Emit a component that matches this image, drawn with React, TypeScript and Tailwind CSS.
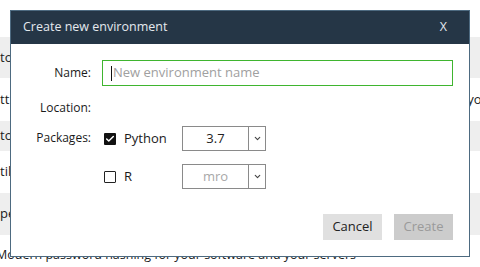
import { Check, ChevronDown } from "lucide-react";

const font = { fontFamily: '"Open Sans", "Noto Sans", sans-serif' };

const Select = ({ value, muted }: { value: string; muted?: boolean }) => (
  <div className="flex h-[25px] w-[84px] border border-[#8a8a8a] bg-white">
    <div className={`flex flex-1 items-center justify-center text-[13px] ${muted ? "text-[#a8a8a8]" : "text-[#222]"}`}>
      {value}
    </div>
    <div className="flex w-[17px] items-center justify-center border-l border-[#8a8a8a]">
      <ChevronDown className="h-[9px] w-[9px] text-[#444]" strokeWidth={3} />
    </div>
  </div>
);

const Checkbox = ({ checked }: { checked?: boolean }) => (
  <div
    className={`flex h-[12px] w-[12px] items-center justify-center rounded-[1px] ${
      checked ? "bg-[#111]" : "border-[1.5px] border-[#222] bg-white"
    }`}
  >
    {checked && <Check className="h-[10px] w-[10px] text-white" strokeWidth={3.5} />}
  </div>
);

export default function App() {
  return (
    <div className="relative h-[267px] w-[480px] overflow-hidden bg-white text-[13px] text-[#1a1a1a]" style={font}>
      {/* page behind */}
      <div className="flex flex-col">
        <div className="h-[37px]" />
        <div className="flex h-[41px] items-center bg-[#eeeeee]">
          <span>to</span>
        </div>
        <div className="flex h-[43px] items-center">
          <span>tt</span>
          <span className="ml-[458px]">you</span>
        </div>
        <div className="flex h-[30px] items-center bg-[#eeeeee]">
          <span>to</span>
        </div>
        <div className="flex h-[42px] items-center">
          <span>til</span>
        </div>
        <div className="flex h-[42px] items-center bg-[#eeeeee]">
          <span>pe</span>
        </div>
        <div className="flex h-[32px] items-end pb-[2px]">
          <span className="-ml-[4px] whitespace-nowrap text-[12.5px]">
            Modern password hashing for your software and your servers
          </span>
        </div>
      </div>

      {/* dialog */}
      <div className="absolute left-[10px] top-[10px] flex h-[247px] w-[460px] flex-col border border-[#4d6a80] bg-white">
        <div className="flex h-[33px] items-center justify-between bg-[#253646] pl-[12px] pr-[22px] text-[12.5px] text-[#e4e9ee]">
          <span>Create new environment</span>
          <span>X</span>
        </div>
        <div className="flex flex-1 flex-col pl-[26px] pr-[16px] pt-[16px] text-[12px]">
          <div className="flex items-center">
            <span className="w-[54px] text-right">Name:</span>
            <div className="ml-[11px] flex h-[26px] flex-1 items-center border border-[#3fb52f] pl-[8px] text-[13px]">
              <span className="h-[15px] w-px bg-[#111]" />
              <span className="ml-px text-[#a0a0a0]">New environment name</span>
            </div>
          </div>
          <div className="mt-[13px] flex">
            <span className="w-[54px] text-right">Location:</span>
          </div>
          <div className="mt-[9px] flex items-start">
            <div className="flex h-[25px] w-[54px] items-center justify-end">
              <span className="-mt-[2px]">Packages:</span>
            </div>
            <div className="ml-[13px] flex flex-col gap-[13px]">
              <div className="flex items-center">
                <Checkbox checked />
                <span className="ml-[8px] w-[58px] text-[13px]">Python</span>
                <Select value="3.7" />
              </div>
              <div className="flex items-center">
                <Checkbox />
                <span className="ml-[8px] w-[58px] text-[13px]">R</span>
                <Select value="mro" muted />
              </div>
            </div>
          </div>
          <div className="mt-auto mb-[16px] flex justify-end gap-[12px] text-[13px]">
            <button className="h-[26px] w-[59px] bg-[#e0e0e0] text-[#222]">Cancel</button>
            <button className="h-[26px] w-[59px] bg-[#cccccc] text-[#9a9a9a]">Create</button>
          </div>
        </div>
      </div>
    </div>
  );
}
